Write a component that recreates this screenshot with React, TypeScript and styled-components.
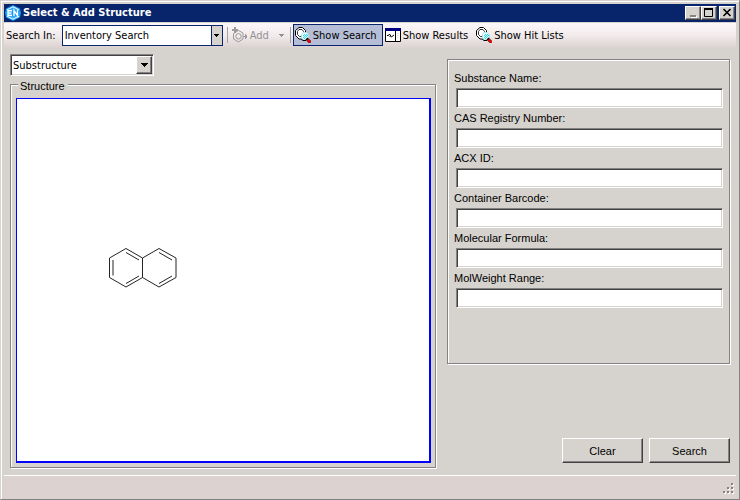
import React, { useId, useState } from "react";
import styled, { createGlobalStyle, css } from "styled-components";

const tahoma = css`
  font-family: "DejaVu Sans Condensed", "DejaVu Sans", sans-serif;
`;

const Global = createGlobalStyle`
  *, *::before, *::after { box-sizing: border-box; }
  body { margin: 0; background: #d6d3ce; }
  button, input, select { font: inherit; color: inherit; border-radius: 0; }
`;

const Window = styled.main`
  display: flex;
  flex-direction: column;
  min-height: 100vh;
  padding: 2px 2px 0 2px;
  background: #d6d3ce;
  color: #000;
  font: 11px/14px "Liberation Sans", Arial, sans-serif;
  border: 1px solid;
  border-color: #d6d3ce #848284 #848284 #d6d3ce;
  box-shadow: inset 1px 1px 0 #fff;
`;

const TitleBar = styled.header`
  display: flex;
  align-items: center;
  gap: 2px;
  height: 18px;
  margin: 1px 1px 0;
  padding: 0 1px;
  background: #08246b;
  color: #fff;
`;

const Title = styled.h1`
  ${tahoma}
  flex: 1;
  margin: 0;
  font-size: 11px;
  line-height: 18px;
  font-weight: 700;
`;

const raised = css`
  background: #d6d3ce;
  border: 1px solid;
  border-color: #fff #424142 #424142 #fff;
  box-shadow: inset -1px -1px 0 #848284;
`;

const CaptionGroup = styled.div`
  display: flex;
`;

const CaptionButton = styled.button`
  ${raised}
  width: 16px;
  height: 14px;
  padding: 0;
  svg { display: block; }
`;

const Toolbar = styled.nav`
  ${tahoma}
  display: flex;
  align-items: center;
  height: 26px;
  margin: 0 1px;
  padding: 1px 2px 2px;
  border-top: 1px solid #d6d3ce;
  background: linear-gradient(#fcf8f9, #f2ebec 50%, #dad2cf);
`;

const ToolLabel = styled.label`
  margin-right: 6px;
  padding-top: 2px;
`;

const ToolText = styled.span`
  padding-top: 2px;
`;

const Combo = styled.div<{ $flat?: boolean }>`
  display: grid;
  width: ${(p) => (p.$flat ? 161 : 144)}px;
  height: ${(p) => (p.$flat ? 21 : 22)}px;
  background: #fff;
  ${(p) =>
    p.$flat
      ? css`border: 1px solid #08246b;`
      : css`
          border: 1px solid;
          border-color: #848284 #fff #fff #848284;
          box-shadow: inset 1px 1px 0 #424142, inset -1px -1px 0 #d6d3ce;
        `}
`;

const Select = styled.select`
  ${tahoma}
  grid-area: 1 / 1;
  min-width: 0;
  appearance: none;
  border: 0;
  outline: 0;
  padding: 1px 20px 0 2px;
  background: transparent;
`;

const ComboArrow = styled.span<{ $flat?: boolean }>`
  grid-area: 1 / 1;
  justify-self: end;
  display: grid;
  place-items: center;
  pointer-events: none;
  ${(p) =>
    p.$flat
      ? css`
          width: 11px;
          background: #d6d3ce;
          border-left: 1px solid #08246b;
        `
      : css`
          ${raised}
          width: 16px;
          margin: 1px 1px 1px 0;
        `}
`;

const Separator = styled.span`
  width: 1px;
  height: 16px;
  margin: 0 2px 0 4px;
  background: #a5a2a5;
`;

const ToolButton = styled.button<{ $active?: boolean; $split?: boolean }>`
  display: flex;
  align-items: center;
  gap: 2px;
  height: 22px;
  padding: 0 ${(p) => (p.$split ? 1 : 5)}px 0 1px;
  white-space: nowrap;
  background: ${(p) => (p.$active ? "#b5bed6" : "transparent")};
  border: 1px solid ${(p) => (p.$active ? "#08246b" : "transparent")};
  &:disabled { color: #949294; }
  svg { flex: none; }
`;

const SplitArrow = styled.span`
  display: flex;
  margin-left: 8px;
`;

const Content = styled.div`
  flex: 1;
  display: grid;
  grid-template-columns: 427px minmax(0, 1fr);
  gap: 10px;
  padding: 6px 6px 7px 7px;
  @media (max-width: 600px) { grid-template-columns: minmax(0, 1fr); }
`;

const Column = styled.section`
  display: flex;
  flex-direction: column;
`;

const etched = css`
  border: 1px solid #848284;
  box-shadow: inset 1px 1px 0 #fff, 1px 1px 0 #fff;
`;

const Group = styled.div`
  flex: 1;
  display: grid;
  grid-template-rows: 6px 9px minmax(0, 1fr);
  margin: 2px 1px 0 0;
`;

const Frame = styled.div`
  ${etched}
  grid-area: 2 / 1 / 4 / 2;
`;

const Legend = styled.h2`
  grid-area: 1 / 1 / 3 / 2;
  z-index: 1;
  justify-self: start;
  align-self: end;
  margin: 0 0 0 8px;
  padding: 0 3px 0 2px;
  background: #d6d3ce;
  font: inherit;
`;

const Canvas = styled.div`
  grid-area: 3 / 1;
  min-height: 360px;
  margin: 5px 5px 5px 6px;
  padding: 148px 0 0 90px;
  background: #fff;
  border: solid #0000ff;
  border-width: 1px 2px 2px 1px;
`;

const SearchPanel = styled.form`
  display: flex;
  flex: 1;
  flex-direction: column;
  justify-content: space-between;
`;

const FieldPanel = styled.div`
  ${etched}
  display: flex;
  flex-direction: column;
  gap: 3px;
  min-height: 305px;
  margin: 5px 1px 0 0;
  padding: 11px 6px 11px 6px;
`;

const Field = styled.div`
  display: flex;
  flex-direction: column;
  gap: 3px;
`;

const TextInput = styled.input`
  height: 20px;
  margin: 0 0 0 2px;
  padding: 1px 4px;
  background: #fff;
  border: 1px solid;
  border-color: #848284 #fff #fff #848284;
  box-shadow: inset 1px 1px 0 #424142, inset -1px -1px 0 #d6d3ce;
  outline: 0;
`;

const Actions = styled.div`
  display: flex;
  justify-content: flex-end;
  gap: 6px;
  padding: 0 1px 5px 0;
`;

const PushButton = styled.button`
  ${raised}
  width: 81px;
  height: 25px;
  padding: 0;
`;

const StatusBar = styled.footer`
  display: flex;
  justify-content: flex-end;
  align-items: flex-end;
  height: 24px;
  margin: 0 1px;
  padding: 0 1px 4px;
  background: #dcd3d0;
  border-top: 1px solid #fff;
`;

const Logo = () => (
  <svg width="16" height="16" viewBox="0 0 16 16" aria-hidden="true">
    <path d="M8 0L15 3.500L16 8L15 12.500L8 16L1 12.500L0 8L1 3.500Z" fill="#109aff" />
    <path d="M8 1.800L13.500 4.500V11.500L8 14.200L2.500 11.500V4.500Z" fill="#38a8f8" stroke="#e8f8ff" strokeWidth="1.200" />
    <path d="M1.500 5H14.500V11H1.500Z" fill="#109aff" />
    <path d="M7 5.700H3V10.300H7M3 8H6.500M9 11V5.500L12.500 10.500V5" fill="none" stroke="#fff" strokeWidth="1.400" />
  </svg>
);

const AddIcon = () => (
  <svg width="16" height="16" viewBox="0 0 16 16" fill="none" stroke="#9c9a9c" aria-hidden="true">
    <path d="M6.500 3.500L11 6V12L6.500 15L1.500 12V6.500Z" />
    <circle cx="6.500" cy="9.300" r="2.700" />
    <path d="M3 0V6M0 3H6" strokeWidth="2" />
    <path d="M11 9.500H15M13.500 7V12M14.500 8V11" />
  </svg>
);

const SearchIcon = () => (
  <svg width="16" height="16" viewBox="0 0 16 16" aria-hidden="true">
    <path d="M4 .5H7.500L10.500 3.500V8.500L7.500 12H4L.5 8.500V3.500Z" fill="#fff" stroke="#000" />
    <path d="M4 2.500H7L8.500 4.500V7L7 9.500H4.500L2.500 7.500V4.500Z" fill="#fff" stroke="#000" strokeWidth=".8" />
    <path d="M8 5.500H11.500L13.500 8V11L11.500 13H8.500L6.500 11V7.500Z" fill="#e7ffff" stroke="#b5dfe7" />
    <path d="M9 7h1v1H9zM11 7h1v1h-1zM8 8h1v1H8zM10 8h1v1h-1zM12 8h1v1h-1zM9 9h1v1H9zM11 9h1v1h-1zM8 10h1v1H8zM10 10h1v1h-1zM9 11h1v1H9z" fill="#20dff0" />
    <path d="M6.500 12.500L8 13.500H11" fill="none" stroke="#000" />
    <path d="M11.500 11.500L15.500 15.500" stroke="#000" strokeWidth="3" />
    <path d="M12.500 12.500L15.500 15.500" stroke="#f00" strokeWidth="2.200" />
  </svg>
);

const ResultsIcon = () => (
  <svg width="16" height="14" viewBox="0 0 16 14" aria-hidden="true">
    <path d="M.5 .5H15.500V13.500H.5Z" fill="#fff" stroke="#000" />
    <path d="M0 0H16V3H0Z" fill="#000084" />
    <path d="M10.500 3V13" stroke="#000" />
    <path d="M2 7.500H3.500L4.500 6L6.500 9L9 7M4.500 8L5.500 9" fill="none" stroke="#000" />
    <path d="M12 5.500H14M12 7.500H14M12 9.500H14" stroke="#e7e3e7" />
  </svg>
);

const ArrowIcon = ({ large = false, color = "#000" }) => (
  <svg
    width={large ? 7 : 5}
    height={large ? 4 : 3}
    viewBox={large ? "0 0 7 4" : "0 0 5 3"}
    shapeRendering="crispEdges"
    aria-hidden="true"
  >
    <path
      fill={color}
      d={large ? "M0 0h7v1H0zM1 1h5v1H1zM2 2h3v1H2zM3 3h1v1H3z" : "M0 0h5v1H0zM1 1h3v1H1zM2 2h1v1H2z"}
    />
  </svg>
);

const Naphthalene = () => (
  <svg width="70" height="42" viewBox="0 0 70 42" fill="none" stroke="#242424" role="img" aria-label="Naphthalene">
    <path d="M2.500 11L19 1.500L35.500 11V30.500L19 40L2.500 30.500ZM35.500 11L52 1.500L69 11V30.500L52 40L35.500 30.500" />
    <path d="M6 13V28.500M19 5.500L32 13M19 36.500L32 29M52 5.500L65 13M52 36.500L65 29" />
  </svg>
);

const GRIP_DOTS = [[8, 0], [4, 4], [8, 4], [0, 8], [4, 8], [8, 8]];

const Grip = () => (
  <svg width="12" height="12" viewBox="0 0 12 12" shapeRendering="crispEdges" aria-hidden="true">
    {GRIP_DOTS.map(([x, y]) => (
      <g key={`${x}-${y}`}>
        <path fill="#fff" d={`M${x + 1} ${y + 1}h2v2h-2z`} />
        <path fill="#848284" d={`M${x} ${y}h2v2h-2z`} />
      </g>
    ))}
  </svg>
);

const FIELDS = [
  "Substance Name",
  "CAS Registry Number",
  "ACX ID",
  "Container Barcode",
  "Molecular Formula",
  "MolWeight Range",
];

const LabeledField = ({ label }: { label: string }) => {
  const id = useId();
  return (
    <Field>
      <label htmlFor={id}>{label}:</label>
      <TextInput id={id} type="text" />
    </Field>
  );
};

export default function App() {
  const [view, setView] = useState("search");
  return (
    <>
      <Global />
      <Window>
        <TitleBar>
          <Logo />
          <Title>Select &amp; Add Structure</Title>
          <CaptionGroup>
            <CaptionButton aria-label="Minimize">
              <svg width="14" height="12" viewBox="0 0 14 12">
                <path fill="#fff" d="M5 9h6v2H5z" />
                <path fill="#848284" d="M4 8h6v2H4z" />
              </svg>
            </CaptionButton>
            <CaptionButton aria-label="Maximize">
              <svg width="14" height="12" viewBox="0 0 14 12">
                <path fill="none" stroke="#000" d="M2.500 2V9.500H10.500V2" />
                <path d="M2 1h9v2H2z" />
              </svg>
            </CaptionButton>
          </CaptionGroup>
          <CaptionButton aria-label="Close">
            <svg width="14" height="12" viewBox="0 0 14 12">
              <path stroke="#000" strokeWidth="1.600" d="M3.500 2L10.500 9M10.500 2L3.500 9" />
            </svg>
          </CaptionButton>
        </TitleBar>
        <Toolbar>
          <ToolLabel htmlFor="source">Search In:</ToolLabel>
          <Combo $flat>
            <Select id="source"><option>Inventory Search</option></Select>
            <ComboArrow $flat><ArrowIcon /></ComboArrow>
          </Combo>
          <Separator />
          <ToolButton disabled $split>
            <AddIcon />
            <ToolText>Add</ToolText>
            <SplitArrow><ArrowIcon color="#949294" /></SplitArrow>
          </ToolButton>
          <Separator />
          <ToolButton $active={view === "search"} onClick={() => setView("search")}>
            <SearchIcon />
            <ToolText>Show Search</ToolText>
          </ToolButton>
          <ToolButton $active={view === "results"} onClick={() => setView("results")}>
            <ResultsIcon />
            <ToolText>Show Results</ToolText>
          </ToolButton>
          <ToolButton $active={view === "hits"} onClick={() => setView("hits")}>
            <SearchIcon />
            <ToolText>Show Hit Lists</ToolText>
          </ToolButton>
        </Toolbar>
        <Content>
          <Column>
            <Combo>
              <Select aria-label="Search type"><option>Substructure</option></Select>
              <ComboArrow><ArrowIcon large /></ComboArrow>
            </Combo>
            <Group>
              <Frame />
              <Legend>Structure</Legend>
              <Canvas><Naphthalene /></Canvas>
            </Group>
          </Column>
          <Column>
            <SearchPanel onSubmit={(e) => e.preventDefault()}>
              <FieldPanel>
                {FIELDS.map((f) => <LabeledField key={f} label={f} />)}
              </FieldPanel>
              <Actions>
                <PushButton type="reset">Clear</PushButton>
                <PushButton type="submit">Search</PushButton>
              </Actions>
            </SearchPanel>
          </Column>
        </Content>
        <StatusBar><Grip /></StatusBar>
      </Window>
    </>
  );
}
